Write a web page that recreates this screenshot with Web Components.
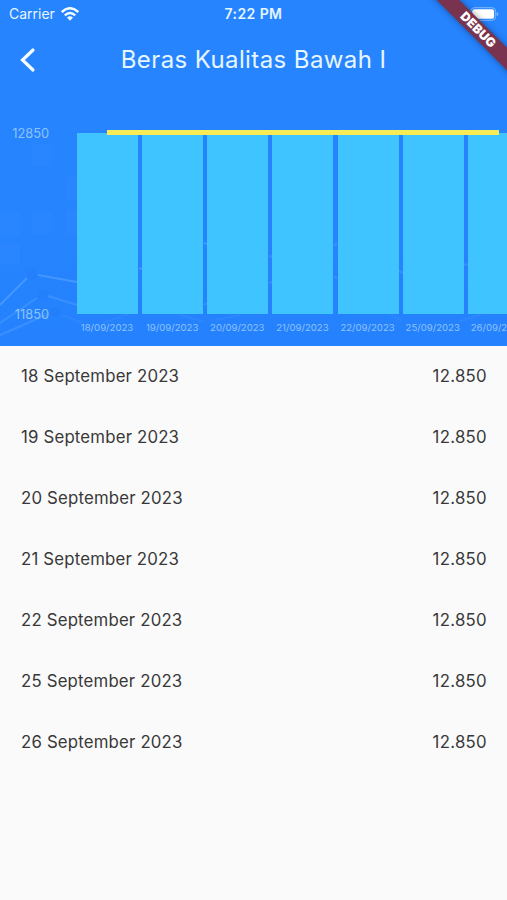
<!DOCTYPE html>
<html lang="id">
<head>
<meta charset="UTF-8">
<meta name="viewport" content="width=device-width, initial-scale=1">
<title>Beras Kualitas Bawah I</title>
<style>
  body {
    margin: 0;
    background: #fafafa;
    font-family: Inter, "Liberation Sans", sans-serif;
    overflow: hidden;
  }
</style>
</head>
<body>
<price-page>
  <status-bar slot="header" carrier="Carrier" time="7:22 PM"></status-bar>
  <nav-bar slot="header">Beras Kualitas Bawah I</nav-bar>
  <price-chart slot="header" max="12850" min="11850"></price-chart>
  <price-list></price-list>
  <debug-banner slot="banner">DEBUG</debug-banner>
</price-page>

<script>
const prices = [
    { day: '18', value: 12850 },
    { day: '19', value: 12850 },
    { day: '20', value: 12850 },
    { day: '21', value: 12850 },
    { day: '22', value: 12850 },
    { day: '25', value: 12850 },
    { day: '26', value: 12850 },
];

class PricePage extends HTMLElement {
    constructor() {
        super();
        this.attachShadow({ mode: 'open' });
        this.shadowRoot.innerHTML = `
      <style>
        :host {
          display: flex;
          flex-direction: column;
          position: relative;
          height: 900px;
          overflow: hidden;
        }

        header {
          display: grid;
          grid-template-rows: 28px 63px 1fr;
          height: 345.5px;
          color: #e6f6ff;
          background: #2684ff;
        }

        /* faint stock chart artwork behind the header */
        .art {
          position: absolute;
          top: 0;
          left: 0;
          z-index: 0;
        }

        ::slotted([slot="header"]) {
          position: relative;
          z-index: 1;
          min-width: 0;
        }
      </style>
      <header>
        <svg class="art" width="507" height="345" viewBox="0 0 507 345" fill="none">
          <defs>
            <linearGradient id="shade" x1="0" y1="0" x2="0" y2="1">
              <stop offset="0" stop-color="#1c6cf0" stop-opacity="0"/>
              <stop offset="1" stop-color="#1c6cf0" stop-opacity=".12"/>
            </linearGradient>
          </defs>
          <path fill="url(#shade)" d="M0 240h507v105H0z"/>
          <g fill="#4b9dff" fill-opacity=".1">
            <path d="M32 144h20v22H32zM67 177h10v23H67zM0 212h20v24H0zM32 212h20v22H32zM0 244h20v20H0zM66 210h11v24H66z"/>
          </g>
          <g stroke="#62abff" stroke-opacity=".5" stroke-width="2">
            <path d="M0 305L27 278M38 275L77 282M139 268l3 1M204 243l3 1"/>
            <path stroke-opacity=".35" d="M0 323L37 298M48 296L77 305M0 335L48 314"/>
            <path stroke-opacity=".15" d="M62 315L82 323M103 323L128 314M180 315L205 322M215 320L240 315M390 314l12 7M460 321l22-7"/>
            <path stroke-opacity=".35" d="M204 305l3-2M269 257l3-1M269 283l3-1M334 245l3-1M334 277l3 1M399 271l4 2M464 265l4-1"/>
          </g>
          <g fill="#1f78ee" fill-opacity=".25">
            <circle cx="32" cy="275" r="5"/>
            <circle cx="43" cy="295" r="5"/>
            <circle cx="55" cy="312" r="5"/>
          </g>
        </svg>
        <slot name="header"></slot>
      </header>
      <slot></slot>
      <slot name="banner"></slot>
    `;
    }
}

class StatusBar extends HTMLElement {
    constructor() {
        super();
        this.attachShadow({ mode: 'open' });
    }

    connectedCallback() {
        this.shadowRoot.innerHTML = `
      <style>
        :host {
          display: grid;
          grid-template-columns: 1fr auto 1fr;
          align-items: center;
          padding: 0 8px;
          font-size: 14px;
          line-height: 28px;
        }

        .carrier {
          display: flex;
          align-items: center;
          gap: 6px;
          padding-left: 1px;
        }

        .time {
          font-weight: 600;
          font-size: 14px;
          letter-spacing: .4px;
        }

        .battery {
          justify-self: end;
        }
      </style>
      <div class="carrier">
        <span>${this.getAttribute('carrier')}</span>
        <svg width="18" height="14" viewBox="0 0 18 14" fill="none" stroke="#f5fcff" stroke-width="2.4">
          <path d="M.8 5Q9-2.6 17.2 5"/>
          <path d="M3.8 8.3Q9 3.5 14.2 8.3"/>
          <path fill="#f5fcff" stroke="none" d="M6 10.5Q9 8 12 10.5L9 13.7z"/>
        </svg>
      </div>
      <span class="time">${this.getAttribute('time')}</span>
      <svg class="battery" width="29" height="14" viewBox="0 0 29 14">
        <rect x=".7" y=".7" width="25" height="12.6" rx="3.6" fill="none" stroke="#7db8ff"/>
        <rect x="2.3" y="2.3" width="21.8" height="9.4" rx="2" fill="#fff"/>
        <path fill="#7db8ff" d="M26.7 5q1.8.5 1.8 2t-1.8 2z"/>
      </svg>
    `;
    }
}

class NavBar extends HTMLElement {
    constructor() {
        super();
        this.attachShadow({ mode: 'open' });
        this.shadowRoot.innerHTML = `
      <style>
        :host {
          display: grid;
          grid-template-columns: 55px 1fr 55px;
          align-items: center;
          text-align: center;
          font-size: 24px;
          letter-spacing: .4px;
          white-space: nowrap;
        }

        svg {
          justify-self: center;
        }
      </style>
      <svg width="16" height="26" viewBox="0 0 16 26" fill="none" stroke="#f5fcff" stroke-width="3.2" stroke-linecap="round">
        <path d="M13 3L2.5 13 13 23"/>
      </svg>
      <span><slot></slot></span>
    `;
    }
}

class PriceChart extends HTMLElement {
    constructor() {
        super();
        this.attachShadow({ mode: 'open' });
    }

    connectedCallback() {
        const columns = prices.map((p) => `
          <div class="column">
            <div class="bar"></div>
            <span>${p.day}/09/2023</span>
          </div>`).join('');

        this.shadowRoot.innerHTML = `
      <style>
        :host {
          display: grid;
          grid-template-columns: 49px 1fr;
          column-gap: 28px;
          padding-top: 42px;
          overflow: hidden;
          color: #8dc2fb;
        }

        .axis {
          display: flex;
          flex-direction: column;
          justify-content: space-between;
          height: 197px;
          margin-top: -7px;
          text-align: right;
          font-size: 12.8px;
          line-height: 16px;
        }

        .plot {
          position: relative;
          display: flex;
          gap: 4.15px;
          min-width: 0;
        }

        .column {
          flex: 0 0 61px;
          text-align: center;
          font-size: 9.6px;
          line-height: 27px;
          white-space: nowrap;
        }

        .column span {
          display: block;
          margin: 0 -4px 0 -5px;
        }

        .bar {
          height: 180.5px;
          background: #40c4ff;
        }

        /* trend line laid over the bar tops */
        .trend {
          position: absolute;
          top: -3px;
          left: 30px;
          width: 392px;
          height: 5px;
          background: #f7ec55;
        }
      </style>
      <div class="axis">
        <span>${this.getAttribute('max')}</span>
        <span>${this.getAttribute('min')}</span>
      </div>
      <div class="plot">${columns}<div class="trend"></div></div>
    `;
    }
}

class PriceList extends HTMLElement {
    constructor() {
        super();
        this.attachShadow({ mode: 'open' });
    }

    connectedCallback() {
        this.shadowRoot.innerHTML = `
      <style>
        :host {
          display: block;
          padding-top: .5px;
          color: #383838;
          font-size: 16.8px;
          letter-spacing: .18px;
        }

        .row {
          display: flex;
          justify-content: space-between;
          padding: 0 20px 0 21px;
          line-height: 61px;
        }

        .row span:last-child {
          letter-spacing: .3px;
        }
      </style>
      ${prices.map((p) => `
        <div class="row">
          <span>${p.day} September 2023</span>
          <span>${p.value.toLocaleString('de-DE')}</span>
        </div>`).join('')}
    `;
    }
}

class DebugBanner extends HTMLElement {
    constructor() {
        super();
        this.attachShadow({ mode: 'open' });
        this.shadowRoot.innerHTML = `
      <style>
        :host {
          position: absolute;
          top: 0;
          right: 0;
          z-index: 2;
          width: 80px;
          height: 80px;
          overflow: hidden;
        }

        div {
          position: absolute;
          top: 22px;
          left: -12px;
          width: 126px;
          height: 16px;
          transform: rotate(45deg);
          background: #79334f;
          box-shadow: 0 0 7px rgba(0, 0, 0, .4);
          color: #fff;
          text-align: center;
          font-size: 12.5px;
          font-weight: 900;
          letter-spacing: .2px;
          line-height: 16px;
        }
      </style>
      <div><slot></slot></div>
    `;
    }
}

customElements.define('price-page', PricePage);
customElements.define('status-bar', StatusBar);
customElements.define('nav-bar', NavBar);
customElements.define('price-chart', PriceChart);
customElements.define('price-list', PriceList);
customElements.define('debug-banner', DebugBanner);
</script>
</body>
</html>
